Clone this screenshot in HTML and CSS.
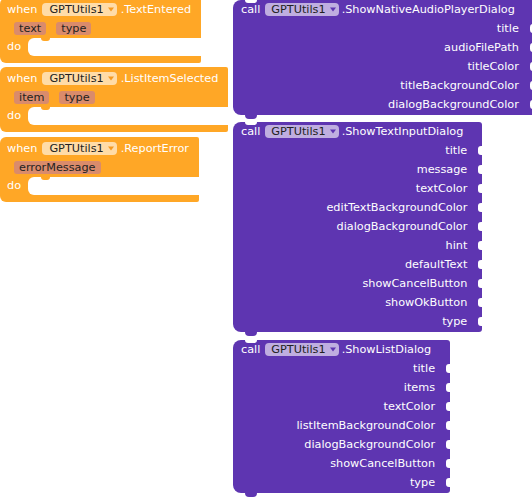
FILE: index.html
```html
<!DOCTYPE html>
<html>
<head>
<meta charset="utf-8">
<link rel="stylesheet" href="styles.css">
</head>
<body>
<div class="workspace">
  <div class="events">
    <div class="event">
      <div class="ev-head"><span class="kw">when</span><span class="dd dd-ev">GPTUtils1<svg class="arrow" width="6" height="5" viewBox="0 0 6 5"><path d="M0 0.5 L6 0.5 L3 4.5 Z"/></svg></span><span class="name">.TextEntered</span></div>
      <div class="ev-params"><span class="param">text</span><span class="param">type</span></div>
      <div class="ev-do"><span class="do">do</span><div class="slot"></div></div>
      <div class="ev-foot"></div>
    </div>
    <div class="event">
      <div class="ev-head"><span class="kw">when</span><span class="dd dd-ev">GPTUtils1<svg class="arrow" width="6" height="5" viewBox="0 0 6 5"><path d="M0 0.5 L6 0.5 L3 4.5 Z"/></svg></span><span class="name">.ListItemSelected</span></div>
      <div class="ev-params"><span class="param">item</span><span class="param">type</span></div>
      <div class="ev-do"><span class="do">do</span><div class="slot"></div></div>
      <div class="ev-foot"></div>
    </div>
    <div class="event event-last">
      <div class="ev-head"><span class="kw">when</span><span class="dd dd-ev">GPTUtils1<svg class="arrow" width="6" height="5" viewBox="0 0 6 5"><path d="M0 0.5 L6 0.5 L3 4.5 Z"/></svg></span><span class="name">.ReportError</span></div>
      <div class="ev-params"><span class="param">errorMessage</span></div>
      <div class="ev-do"><span class="do">do</span><div class="slot"></div></div>
      <div class="ev-foot"></div>
    </div>
  </div>
  <div class="methods">
    <div class="method">
      <div class="m-head"><span class="kw">call</span><span class="dd dd-m">GPTUtils1<svg class="arrow" width="6" height="5" viewBox="0 0 6 5"><path d="M0 0.5 L6 0.5 L3 4.5 Z"/></svg></span><span class="name">.ShowNativeAudioPlayerDialog</span></div>
      <div class="arg">title</div>
      <div class="arg">audioFilePath</div>
      <div class="arg">titleColor</div>
      <div class="arg">titleBackgroundColor</div>
      <div class="arg">dialogBackgroundColor</div>
    </div>
    <div class="method">
      <div class="m-head"><span class="kw">call</span><span class="dd dd-m">GPTUtils1<svg class="arrow" width="6" height="5" viewBox="0 0 6 5"><path d="M0 0.5 L6 0.5 L3 4.5 Z"/></svg></span><span class="name">.ShowTextInputDialog</span></div>
      <div class="arg">title</div>
      <div class="arg">message</div>
      <div class="arg">textColor</div>
      <div class="arg">editTextBackgroundColor</div>
      <div class="arg">dialogBackgroundColor</div>
      <div class="arg">hint</div>
      <div class="arg">defaultText</div>
      <div class="arg">showCancelButton</div>
      <div class="arg">showOkButton</div>
      <div class="arg">type</div>
    </div>
    <div class="method method-last">
      <div class="m-head"><span class="kw">call</span><span class="dd dd-m">GPTUtils1<svg class="arrow" width="6" height="5" viewBox="0 0 6 5"><path d="M0 0.5 L6 0.5 L3 4.5 Z"/></svg></span><span class="name">.ShowListDialog</span></div>
      <div class="arg">title</div>
      <div class="arg">items</div>
      <div class="arg">textColor</div>
      <div class="arg">listItemBackgroundColor</div>
      <div class="arg">dialogBackgroundColor</div>
      <div class="arg">showCancelButton</div>
      <div class="arg">type</div>
    </div>
  </div>
</div>
</body>
</html>
```

FILE: styles.css
```css
html, body {
  margin: 0;
  padding: 0;
  overflow: hidden;
  background: #ffffff;
}
body {
  font-family: "DejaVu Sans", sans-serif;
  font-size: 11.25px;
  color: #ffffff;
  white-space: nowrap;
}
.workspace {
  display: flex;
  align-items: flex-start;
  width: 532px;
  height: 500px;
}

/* ---------- event blocks ---------- */
.events {
  width: 233px;
  flex: none;
  display: flex;
  flex-direction: column;
  align-items: flex-start;
  gap: 4px;
  margin-top: -2px;
}
.event-last {
  margin-top: 1px;
}
.event {
  background: #ffa726;
  border-radius: 6px 2px 2px 6px;
  display: flex;
  flex-direction: column;
}
.ev-head {
  display: flex;
  align-items: center;
  height: 21px;
  box-sizing: border-box;
  padding: 1px 10px 0 7px;
}
.kw {
  margin-right: 5px;
}
.name {
  margin-left: 4px;
}
.dd {
  display: inline-flex;
  align-items: center;
  height: 13px;
  padding: 0 3px 0 7px;
  border-radius: 4px;
  color: #222222;
}
.dd .arrow {
  margin-left: 4px;
}
.dd-ev {
  background: #ffdca8;
}
.dd-ev .arrow {
  fill: #f59a22;
}
.dd-m {
  background: #bfaee0;
  padding-left: 6px;
}
.dd-m .arrow {
  fill: #5e35b1;
}
.ev-params {
  display: flex;
  align-items: center;
  gap: 10px;
  height: 19px;
  padding-left: 14px;
}
.param {
  display: inline-block;
  height: 13px;
  line-height: 13px;
  padding: 0 5px;
  border-radius: 3px;
  background: #da8b6b;
  color: #222222;
}
.ev-do {
  display: flex;
  height: 18px;
}
.do {
  width: 28px;
  box-sizing: border-box;
  padding-left: 7px;
  line-height: 18px;
  flex: none;
}
.slot {
  flex: 1;
  background: #ffffff;
  border-radius: 6px 0 0 6px;
  position: relative;
}
.slot::before {
  content: "";
  position: absolute;
  left: 13px;
  top: 0;
  width: 9px;
  height: 3px;
  background: #ffa726;
  border-radius: 0 0 5px 5px;
}
.ev-foot {
  height: 7px;
}

/* ---------- method blocks ---------- */
.methods {
  flex: none;
  display: flex;
  flex-direction: column;
  align-items: flex-start;
  gap: 7px;
}
.method-last {
  margin-top: 1px;
}
.method {
  position: relative;
  background: #5e35b1;
  border-radius: 8px 3px 3px 8px;
  padding-bottom: 1px;
  display: flex;
  flex-direction: column;
}
.method::before {
  content: "";
  position: absolute;
  left: 12px;
  top: 0;
  width: 12px;
  height: 3px;
  background: #ffffff;
  border-radius: 0 0 6px 6px;
}
.method::after {
  content: "";
  position: absolute;
  left: 12px;
  bottom: -4px;
  width: 12px;
  height: 4px;
  background: #5e35b1;
  border-radius: 0 0 6px 6px;
}
.m-head {
  display: flex;
  align-items: center;
  height: 19px;
  padding: 0 19px 0 8px;
}
.m-head .name {
  margin-left: 3px;
}
.arg {
  position: relative;
  display: flex;
  align-items: center;
  justify-content: flex-end;
  height: 19px;
  padding-right: 15px;
}
.arg::after {
  content: "";
  position: absolute;
  right: 0;
  top: 5px;
  width: 4px;
  height: 9px;
  background: #ffffff;
  border-radius: 3px 0 0 3px;
}
```
